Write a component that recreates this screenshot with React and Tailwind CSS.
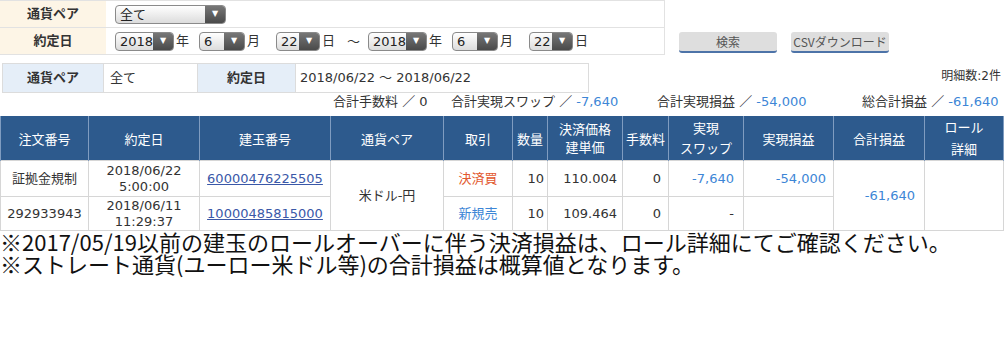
import React from 'react';

const Select = ({ value, width }) => (
  <div
    className="flex h-[19px] rounded-[4px] border border-[#8a8a8a] overflow-hidden bg-gradient-to-b from-white to-[#dcdcdc]"
    style={{ width }}
  >
    <span className="flex-1 pl-[4px] text-[13px] leading-[17px] text-[#222]">{value}</span>
    <span className="w-[20px] flex items-center justify-center bg-gradient-to-b from-[#777] to-[#4a4a4a] text-white text-[8px]">▼</span>
  </div>
);

const rows = [
  {
    no: '証拠金規制',
    date: ['2018/06/22', '5:00:00'],
    pos: '60000476225505',
    type: '決済買',
    typeColor: 'text-[#e2582e]',
    qty: '10',
    price: '110.004',
    fee: '0',
    swap: '-7,640',
    pl: '-54,000',
  },
  {
    no: '292933943',
    date: ['2018/06/11', '11:29:37'],
    pos: '10000485815000',
    type: '新規売',
    typeColor: 'text-[#3d86d6]',
    qty: '10',
    price: '109.464',
    fee: '0',
    swap: '-',
    pl: '',
  },
];

export default function App() {
  return (
    <div className="w-[1005px] h-[346px] bg-white text-[#333] font-['DejaVu_Sans','Noto_Sans_CJK_JP',sans-serif]">
      {/* search form */}
      <div className="flex">
        <table className="w-[665px] border-collapse text-[13px]">
          <tbody>
            <tr className="h-[27px] border-y border-[#e2e2e2]">
              <th className="w-[106px] bg-[#fdf5e6] font-bold text-center">通貨ペア</th>
              <td className="pl-[9px] border-r border-[#e2e2e2]">
                <Select value="全て" width={111} />
              </td>
            </tr>
            <tr className="h-[27px] border-b border-[#e2e2e2]">
              <th className="bg-[#fdf5e6] font-bold text-center">約定日</th>
              <td className="pl-[9px] border-r border-[#e2e2e2]">
                <div className="flex items-center">
                  <Select value="2018" width={59} />
                  <span className="ml-[2px] w-[23px]">年</span>
                  <Select value="6" width={46} />
                  <span className="ml-[2px] w-[29px]">月</span>
                  <Select value="22" width={44} />
                  <span className="ml-[2px]">日</span>
                  <span className="ml-[12px] mr-[8px] font-['Noto_Sans_CJK_JP']">〜</span>
                  <Select value="2018" width={59} />
                  <span className="ml-[2px] w-[23px]">年</span>
                  <Select value="6" width={46} />
                  <span className="ml-[2px] w-[29px]">月</span>
                  <Select value="22" width={44} />
                  <span className="ml-[2px]">日</span>
                </div>
              </td>
            </tr>
          </tbody>
        </table>
        <div className="flex items-start gap-[14px] pt-[32px] pl-[14px] font-['Noto_Sans_CJK_JP',sans-serif]">
          <button className="w-[98px] h-[21px] rounded-[3px] bg-[#dedede] border-b-2 border-[#4d73a8] text-[12px] text-[#555]">検索</button>
          <button className="w-[98px] h-[21px] rounded-[3px] bg-[#dedede] border-b-2 border-[#4d73a8] text-[12px] text-[#555]">CSVダウンロード</button>
        </div>
      </div>

      {/* condition summary */}
      <div className="flex items-start mt-[8px] pl-[2px]">
        <table className="w-[587px] border-collapse text-[13px]">
          <tbody>
            <tr className="h-[29px]">
              <th className="w-[101px] bg-[#e5eef8] border border-[#dcdcdc] font-bold text-center">通貨ペア</th>
              <td className="w-[94px] border border-[#dcdcdc] pl-[6px]">全て</td>
              <th className="w-[98px] bg-[#e5eef8] border border-[#dcdcdc] font-bold text-center">約定日</th>
              <td className="border border-[#dcdcdc] pl-[4px]">2018/06/22 〜 2018/06/22</td>
            </tr>
          </tbody>
        </table>
        <div className="flex-1 text-right text-[12px] pr-[4px] pt-[4px]">明細数:2件</div>
      </div>
      <div className="flex pl-[333px] text-[13px] leading-[18px] whitespace-nowrap">
        <span className="w-[118px]">合計手数料 ／ 0</span>
        <span className="w-[206px]">合計実現スワップ ／ <span className="text-[#3d86d6]">-7,640</span></span>
        <span className="w-[205px]">合計実現損益 ／ <span className="text-[#3d86d6]">-54,000</span></span>
        <span>総合計損益 ／ <span className="text-[#3d86d6]">-61,640</span></span>
      </div>

      {/* detail table */}
      <table className="mt-[5px] w-[1004px] border-collapse text-[13px] leading-[17px]">
        <thead>
          <tr className="h-[44px] bg-[#2d5a8d] text-white font-['Noto_Sans_CJK_JP',sans-serif]">
            <th className="w-[88px] font-normal border-x border-[#7f9cc0]">注文番号</th>
            <th className="w-[111px] font-normal border-x border-[#7f9cc0]">約定日</th>
            <th className="w-[131px] font-normal border-x border-[#7f9cc0]">建玉番号</th>
            <th className="w-[113px] font-normal border-x border-[#7f9cc0]">通貨ペア</th>
            <th className="w-[69px] font-normal border-x border-[#7f9cc0]">取引</th>
            <th className="w-[35px] font-normal border-x border-[#7f9cc0]">数量</th>
            <th className="w-[75px] font-normal border-x border-[#7f9cc0] leading-[18px]">決済価格<br />建単価</th>
            <th className="w-[46px] font-normal border-x border-[#7f9cc0]">手数料</th>
            <th className="w-[75px] font-normal border-x border-[#7f9cc0] leading-[20px]">実現<br />スワップ</th>
            <th className="w-[90px] font-normal border-x border-[#7f9cc0]">実現損益</th>
            <th className="w-[91px] font-normal border-x border-[#7f9cc0]">合計損益</th>
            <th className="font-normal border-x border-[#7f9cc0] leading-[22px]">ロール<br />詳細</th>
          </tr>
        </thead>
        <tbody>
          {rows.map((r, i) => (
            <tr key={r.pos} className={i === 0 ? 'h-[36px]' : 'h-[34px]'}>
              <td className="border border-[#d6d6d6] text-center">{r.no}</td>
              <td className="border border-[#d6d6d6] text-center leading-[16px]">{r.date[0]}<br />{r.date[1]}</td>
              <td className="border border-[#d6d6d6] text-center">
                <a href="#" className="text-[#3a58a8] underline">{r.pos}</a>
              </td>
              {i === 0 && (
                <td rowSpan={2} className="border border-[#d6d6d6] text-center">米ドル-円</td>
              )}
              <td className={`border border-[#d6d6d6] text-center ${r.typeColor}`}>{r.type}</td>
              <td className="border border-[#d6d6d6] text-right pr-[3px]">{r.qty}</td>
              <td className="border border-[#d6d6d6] text-right pr-[5px]">{r.price}</td>
              <td className="border border-[#d6d6d6] text-right pr-[7px]">{r.fee}</td>
              <td className={`border border-[#d6d6d6] text-right pr-[9px] ${r.swap === '-' ? 'text-[#333]' : 'text-[#3d86d6]'}`}>{r.swap}</td>
              <td className="border border-[#d6d6d6] text-right pr-[7px] text-[#3d86d6]">{r.pl}</td>
              {i === 0 && (
                <>
                  <td rowSpan={2} className="border border-[#d6d6d6] text-right pr-[9px] text-[#3d86d6]">-61,640</td>
                  <td rowSpan={2} className="border border-[#d6d6d6]"></td>
                </>
              )}
            </tr>
          ))}
        </tbody>
      </table>

      <div className="-mt-[1px] text-[22px] leading-[22px] text-[#111] font-['Noto_Sans_CJK_JP',sans-serif] whitespace-nowrap">
        <p>※2017/05/19以前の建玉のロールオーバーに伴う決済損益は、ロール詳細にてご確認ください。</p>
        <p>※ストレート通貨(ユーロー米ドル等)の合計損益は概算値となります。</p>
      </div>
    </div>
  );
}
